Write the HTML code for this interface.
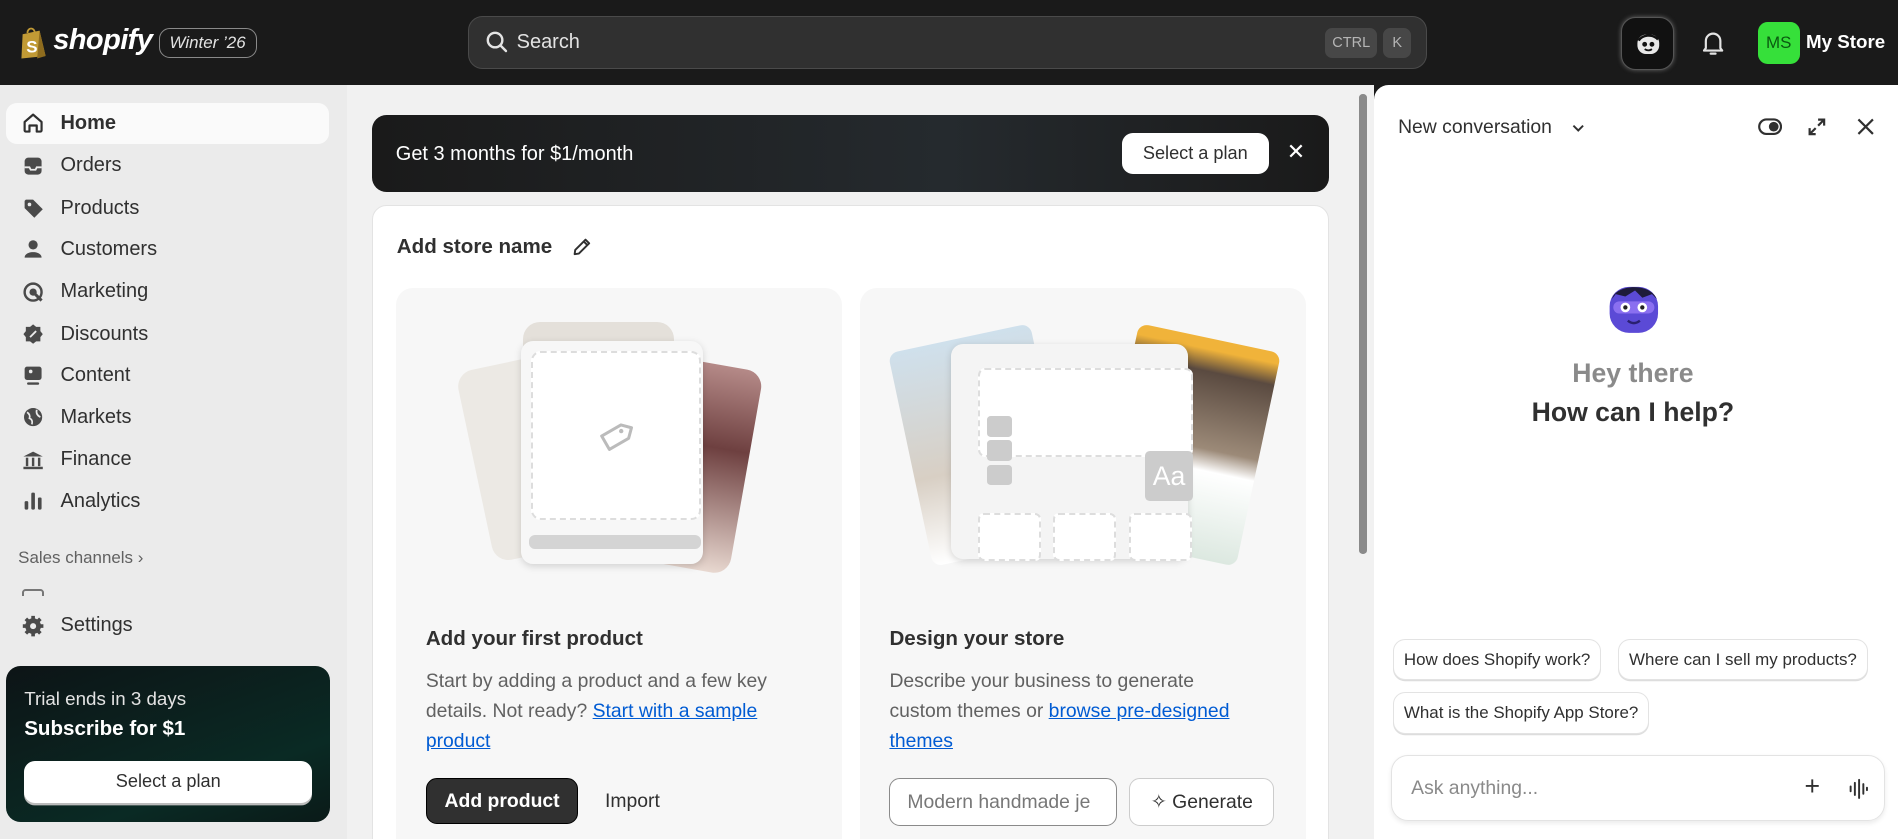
<!DOCTYPE html>
<html><head><meta charset="utf-8"><style>
*{box-sizing:border-box;margin:0;padding:0}
html,body{width:1898px;height:839px;overflow:hidden;background:#1a1a1a}
#w{zoom:1.21045;width:1568px;height:693px;position:relative;font-family:"Liberation Sans",sans-serif;color:#303030}
.a{position:absolute}
.top{left:0;top:0;width:1568px;height:70px;background:#1a1a1a}
.side{left:0;top:70px;width:287px;height:623px;background:#ebebeb}
.nav{position:absolute;left:5px;width:267px;height:34px;display:flex;align-items:center;font-size:16.5px;color:#303030}
.nav svg{position:absolute;left:12px;width:20px;height:20px}
.nav span{position:absolute;left:45px}
.main{left:287px;top:70px;width:848px;height:623px;background:#f1f1f1}
.panel{left:1135px;top:70px;width:433px;height:623px;background:#fff;border-radius:12px 0 0 0}
.sub{background:#f7f7f7;border-radius:14px}
.btn{border-radius:9px;font-size:16px;display:flex;align-items:center;justify-content:center}
a{color:#005bd3;text-decoration:underline}
.chip{position:absolute;height:34px;border:1px solid #e3e3e3;border-radius:10px;font-size:14px;display:flex;align-items:center;padding:0 8px;background:#fff;box-shadow:0 1px 0 #ddd}
</style></head><body><div id="w">
<div class="a top">
 <svg class="a" style="left:16px;top:22px" width="24" height="27" viewBox="0 0 24 27"><path d="M3 6 L17 3 L22 24 L2 26 Z" fill="#c19a35"/><path d="M17 3 L22 24 L15 26 Z" fill="#8f6c1e"/><path d="M7 5 C7 0 13 0 13 5" stroke="#c19a35" fill="none" stroke-width="1.5"/><text x="6" y="21" font-size="14" font-weight="bold" fill="#fff" font-family="Liberation Sans">S</text></svg>
 <div class="a" style="left:44px;top:20px;font-size:24px;font-weight:bold;font-style:italic;color:#fff;letter-spacing:-0.5px">shopify</div>
 <div class="a" style="left:131px;top:23px;width:81px;height:25px;border:1px solid #8a8a8a;border-radius:9px;color:#e3e3e3;font-size:14px;font-style:italic;display:flex;align-items:center;justify-content:center">Winter ’26</div>
 <div class="a" style="left:387px;top:13px;width:792px;height:44px;background:#303030;border:1px solid #4a4a4a;border-radius:12px">
  <svg class="a" style="left:14px;top:12px" width="18" height="18" viewBox="0 0 18 18"><circle cx="7.5" cy="7.5" r="6" stroke="#e3e3e3" stroke-width="2" fill="none"/><path d="M12 12 L16.5 16.5" stroke="#e3e3e3" stroke-width="2" stroke-linecap="round"/></svg>
  <div class="a" style="left:39px;top:12px;font-size:16.5px;color:#e3e3e3">Search</div>
  <div class="a" style="left:707px;top:9px;width:43px;height:25px;background:#474747;border-radius:6px;color:#b5b5b5;font-size:12px;display:flex;align-items:center;justify-content:center">CTRL</div>
  <div class="a" style="left:755px;top:9px;width:23px;height:25px;background:#474747;border-radius:6px;color:#b5b5b5;font-size:12px;display:flex;align-items:center;justify-content:center">K</div>
 </div>
 <div class="a" style="left:1339px;top:14px;width:44px;height:44px;background:#111;border:1px solid #555;border-radius:12px;box-shadow:0 0 4px #666"><svg class="a" style="left:11px;top:11px" width="22" height="22" viewBox="0 0 22 22"><rect x="2" y="3" width="18" height="16" rx="7" fill="#e8e8e8"/><path d="M3 8 C6 3 14 2 19 7" stroke="#111" stroke-width="2" fill="none"/><circle cx="8" cy="11" r="2" fill="#111"/><circle cx="14" cy="11" r="2" fill="#111"/><path d="M8 15 Q11 17 14 15" stroke="#111" stroke-width="1.5" fill="none"/></svg></div>
 <svg class="a" style="left:1405px;top:25px" width="20" height="22" viewBox="0 0 20 22"><path d="M4 15 V9 a6 6 0 0 1 12 0 V15 L17.5 17 H2.5 Z" stroke="#e3e3e3" stroke-width="1.8" fill="none" stroke-linejoin="round"/><path d="M8 19.5 h4" stroke="#e3e3e3" stroke-width="1.8" stroke-linecap="round"/></svg>
 <div class="a" style="left:1452px;top:18px;width:35px;height:35px;background:#36e03a;border-radius:8px;color:#0a5a10;font-size:14px;display:flex;align-items:center;justify-content:center">MS</div>
 <div class="a" style="left:1492px;top:26px;font-size:15.5px;font-weight:bold;color:#fff">My Store</div>
</div>

<div class="a side">
 <div class="nav" style="top:15px;background:#fafafa;border-radius:9px;font-weight:600"><svg viewBox="0 0 20 20"><path d="M3 9 L10 3 L17 9 V16 a1 1 0 0 1-1 1 H13 V12 H7 V17 H4 a1 1 0 0 1-1-1 Z" stroke="#303030" stroke-width="1.8" fill="none" stroke-linejoin="round"/></svg><span>Home</span></div>
 <div class="nav" style="top:50px"><svg viewBox="0 0 20 20"><rect x="3" y="3" width="14" height="14" rx="3" fill="#4a4a4a"/><path d="M3 11 H7 L8 13 H12 L13 11 H17" stroke="#ebebeb" stroke-width="1.5" fill="none"/></svg><span>Orders</span></div>
 <div class="nav" style="top:85px"><svg viewBox="0 0 20 20"><path d="M3 4 V10 L11 18 L18 11 L10 3 H4 Z" fill="#4a4a4a"/><circle cx="7" cy="7" r="1.5" fill="#ebebeb"/></svg><span>Products</span></div>
 <div class="nav" style="top:119px"><svg viewBox="0 0 20 20"><circle cx="10" cy="6.5" r="3.8" fill="#4a4a4a"/><path d="M3 17 C3 11 17 11 17 17 Z" fill="#4a4a4a"/></svg><span>Customers</span></div>
 <div class="nav" style="top:154px"><svg viewBox="0 0 20 20"><circle cx="10" cy="10" r="7" stroke="#4a4a4a" stroke-width="2" fill="none"/><circle cx="10" cy="10" r="3" fill="#4a4a4a"/><path d="M10 10 L17 17" stroke="#4a4a4a" stroke-width="2.5"/></svg><span>Marketing</span></div>
 <div class="nav" style="top:189px"><svg viewBox="0 0 20 20"><path d="M10 2 L12.5 4 L16 4 L16 7.5 L18 10 L16 12.5 L16 16 L12.5 16 L10 18 L7.5 16 L4 16 L4 12.5 L2 10 L4 7.5 L4 4 L7.5 4 Z" fill="#4a4a4a"/><path d="M7.5 12.5 L12.5 7.5" stroke="#ebebeb" stroke-width="1.5"/></svg><span>Discounts</span></div>
 <div class="nav" style="top:223px"><svg viewBox="0 0 20 20"><rect x="3" y="3" width="14" height="11" rx="2" fill="#4a4a4a"/><rect x="5" y="16" width="10" height="2" rx="1" fill="#4a4a4a"/><circle cx="8" cy="7" r="1.5" fill="#ebebeb"/></svg><span>Content</span></div>
 <div class="nav" style="top:258px"><svg viewBox="0 0 20 20"><circle cx="10" cy="10" r="7.5" fill="#4a4a4a"/><path d="M5 6 Q8 8 7 11 Q10 12 9 16 M13 4 Q12 8 16 10" stroke="#ebebeb" stroke-width="1.4" fill="none"/></svg><span>Markets</span></div>
 <div class="nav" style="top:293px"><svg viewBox="0 0 20 20"><path d="M2 7 L10 3 L18 7 Z" fill="#4a4a4a"/><rect x="4" y="8" width="2" height="7" fill="#4a4a4a"/><rect x="9" y="8" width="2" height="7" fill="#4a4a4a"/><rect x="14" y="8" width="2" height="7" fill="#4a4a4a"/><rect x="2" y="15.5" width="16" height="2" fill="#4a4a4a"/></svg><span>Finance</span></div>
 <div class="nav" style="top:327px"><svg viewBox="0 0 20 20"><rect x="3" y="10" width="3" height="7" rx="1" fill="#4a4a4a"/><rect x="8.5" y="3" width="3" height="14" rx="1" fill="#4a4a4a"/><rect x="14" y="7" width="3" height="10" rx="1" fill="#4a4a4a"/></svg><span>Analytics</span></div>
 <div class="a" style="left:15px;top:383px;font-size:14px;color:#616161">Sales channels ›</div>
 <div class="a" style="left:18px;top:417px;width:90px;height:5px;overflow:hidden"><div style="width:18px;height:10px;border:2px solid #777;border-radius:3px"></div></div>
 <div class="nav" style="top:430px"><svg viewBox="0 0 20 20"><circle cx="10" cy="10" r="6.5" fill="#4a4a4a"/><path d="M10 1.5 V5 M10 15 V18.5 M1.5 10 H5 M15 10 H18.5 M4 4 L6.5 6.5 M13.5 13.5 L16 16 M16 4 L13.5 6.5 M6.5 13.5 L4 16" stroke="#4a4a4a" stroke-width="3"/><circle cx="10" cy="10" r="2.5" fill="#ebebeb"/></svg><span>Settings</span></div>
 <div class="a" style="left:5px;top:480px;width:268px;height:129px;border-radius:12px;background:linear-gradient(160deg,#0d1416,#0a2a24 70%,#0a1a18);">
  <div class="a" style="left:15px;top:18px;font-size:15.5px;color:#e3e3e3">Trial ends in 3 days</div>
  <div class="a" style="left:15px;top:42px;font-size:17px;font-weight:bold;color:#fff">Subscribe for $1</div>
  <div class="a btn" style="left:15px;top:79px;width:238px;height:34px;background:#fff;color:#303030;font-size:15px;box-shadow:0 2px 0 #bbb">Select a plan</div>
 </div>
</div>

<div class="a main">
 <div class="a" style="left:20px;top:25px;width:791px;height:64px;border-radius:12px;background:linear-gradient(90deg,#1a1a1a,#252a2e 60%,#1a1a1a)">
  <div class="a" style="left:20px;top:23px;font-size:16.5px;color:#fff">Get 3 months for $1/month</div>
  <div class="a btn" style="left:620px;top:15px;width:121px;height:34px;background:#fff;color:#303030;font-size:15px">Select a plan</div>
  <div class="a" style="left:756px;top:20px;color:#fff;font-size:18px">✕</div>
 </div>
 <div class="a" style="left:20px;top:99px;width:791px;height:540px;background:#fff;border-radius:12px;border:1px solid #e3e3e3">
  <div class="a" style="left:20px;top:24px;font-size:17px;font-weight:600">Add store name</div>
  <svg class="a" style="left:164px;top:25px" width="18" height="18" viewBox="0 0 18 18"><path d="M3 15 L3.5 11.5 L12 3 L15 6 L6.5 14.5 Z M10.5 4.5 L13.5 7.5" stroke="#303030" stroke-width="1.6" fill="none" stroke-linejoin="round"/></svg>
  <div class="a sub" style="left:19px;top:68px;width:369px;height:480px">
   <div class="a" style="left:65px;top:60px;width:90px;height:160px;background:#ece9e4;border-radius:14px;transform:rotate(-12deg)"></div>
   <div class="a" style="left:185px;top:60px;width:105px;height:170px;background:linear-gradient(#b58a88,#6e4040 40%,#e8d8d0);border-radius:14px;transform:rotate(10deg)"></div>
   <div class="a" style="left:105px;top:28px;width:125px;height:40px;background:#e4e0da;border-radius:14px"></div>
   <div class="a" style="left:104px;top:44px;width:150px;height:184px;background:#f7f7f7;border-radius:10px;box-shadow:0 2px 6px rgba(0,0,0,.15)">
    <div class="a" style="left:8px;top:8px;width:140px;height:140px;border:2px dashed #ddd;background:#fff;border-radius:8px"></div>
    <svg class="a" style="left:62px;top:64px" width="30" height="30" viewBox="0 0 30 30"><path d="M17 4 L26 4 L26 13 L13 26 L4 17 Z" stroke="#bbb" stroke-width="2.5" fill="none" stroke-linejoin="round" transform="rotate(15 15 15)"/><circle cx="20" cy="10" r="1.8" fill="#bbb"/></svg>
    <div class="a" style="left:6px;top:160px;width:142px;height:12px;background:#d4d4d4;border-radius:5px"></div>
   </div>
   <div class="a" style="left:25px;top:280px;font-size:17px;font-weight:600">Add your first product</div>
   <div class="a" style="left:25px;top:312px;width:330px;font-size:16px;line-height:25px;color:#616161">Start by adding a product and a few key details. Not ready? <a>Start with a sample product</a></div>
   <div class="a btn" style="left:25px;top:405px;width:126px;height:38px;background:#303030;color:#fff;font-weight:600;border:1px solid #000">Add product</div>
   <div class="a" style="left:173px;top:415px;font-size:16px">Import</div>
  </div>
  <div class="a sub" style="left:403px;top:68px;width:368px;height:480px">
   <div class="a" style="left:40px;top:40px;width:120px;height:180px;background:linear-gradient(#cfe0ec,#d8cfc4 60%,#fff);border-radius:8px;transform:rotate(-12deg)"></div>
   <div class="a" style="left:210px;top:40px;width:120px;height:180px;background:linear-gradient(#f0b33a 5%,#5a4a40 15%,#9c8a78 50%,#fff 60%,#dce8e0);border-radius:8px;transform:rotate(12deg)"></div>
   <div class="a" style="left:75px;top:46px;width:196px;height:178px;background:#f4f4f4;border-radius:10px;box-shadow:0 2px 6px rgba(0,0,0,.15)">
    <div class="a" style="left:22px;top:20px;width:178px;height:74px;border:2px dashed #ddd;background:#fff;border-radius:6px"></div>
    <div class="a" style="left:30px;top:60px;width:20px;height:17px;background:#ccc;border-radius:3px"></div>
    <div class="a" style="left:30px;top:80px;width:20px;height:17px;background:#ccc;border-radius:3px"></div>
    <div class="a" style="left:30px;top:100px;width:20px;height:17px;background:#ccc;border-radius:3px"></div>
    <div class="a" style="left:160px;top:89px;width:40px;height:41px;background:#ccc;border-radius:4px;color:#fff;font-size:22px;display:flex;align-items:center;justify-content:center">Aa</div>
    <div class="a" style="left:22px;top:140px;width:52px;height:40px;border:2px dashed #ddd;background:#fff;border-radius:5px"></div>
    <div class="a" style="left:84px;top:140px;width:52px;height:40px;border:2px dashed #ddd;background:#fff;border-radius:5px"></div>
    <div class="a" style="left:147px;top:140px;width:52px;height:40px;border:2px dashed #ddd;background:#fff;border-radius:5px"></div>
   </div>
   <div class="a" style="left:24px;top:280px;font-size:17px;font-weight:600">Design your store</div>
   <div class="a" style="left:24px;top:312px;width:300px;font-size:16px;line-height:25px;color:#616161">Describe your business to generate custom themes or <a>browse pre-designed themes</a></div>
   <div class="a" style="left:24px;top:405px;width:188px;height:40px;border:1px solid #8a8a8a;border-radius:9px;background:#fff;font-size:16px;color:#777;padding:10px 14px;white-space:nowrap;overflow:hidden">Modern handmade je</div>
   <div class="a btn" style="left:222px;top:405px;width:120px;height:40px;background:#fff;border:1px solid #ccc;gap:6px">✧ Generate</div>
  </div>
 </div>
 <div class="a" style="left:836px;top:8px;width:6px;height:380px;background:#8a8a8a;border-radius:3px"></div>
</div>

<div class="a panel">
 <div class="a" style="left:20px;top:26px;font-size:16px;color:#303030">New conversation</div>
 <svg class="a" style="left:163px;top:31px" width="12" height="10" viewBox="0 0 12 10"><path d="M2 3 L6 7 L10 3" stroke="#303030" stroke-width="1.6" fill="none"/></svg>
 <svg class="a" style="left:317px;top:27px" width="20" height="16" viewBox="0 0 20 16"><rect x="1" y="2" width="18" height="12" rx="6" stroke="#303030" stroke-width="1.8" fill="none"/><circle cx="13" cy="8" r="4" fill="#303030"/></svg>
 <svg class="a" style="left:357px;top:26px" width="18" height="18" viewBox="0 0 18 18"><path d="M10 3 H15 V8 M15 3 L10 8 M8 15 H3 V10 M3 15 L8 10" stroke="#303030" stroke-width="1.8" fill="none"/></svg>
 <svg class="a" style="left:398px;top:27px" width="16" height="16" viewBox="0 0 16 16"><path d="M2 2 L14 14 M14 2 L2 14" stroke="#303030" stroke-width="1.8"/></svg>
 <svg class="a" style="left:192px;top:163px" width="46" height="44" viewBox="0 0 46 44"><rect x="3" y="4" width="40" height="38" rx="16" fill="#5b4ad6"/><path d="M5 14 C8 2 36 0 42 14 L38 10 L30 13 L24 7 L16 12 L8 10 Z" fill="#1e1b3a"/><rect x="6" y="16" width="34" height="10" rx="5" fill="#8a6ff0"/><circle cx="16" cy="21" r="4" fill="#fff"/><circle cx="30" cy="21" r="4" fill="#fff"/><circle cx="16" cy="21" r="1.8" fill="#222"/><circle cx="30" cy="21" r="1.8" fill="#222"/><path d="M18 32 Q23 36 28 32" stroke="#2a2070" stroke-width="2" fill="none"/></svg>
 <div class="a" style="left:0;top:226px;width:428px;text-align:center;font-size:22px;font-weight:bold;color:#8a8a8a">Hey there</div>
 <div class="a" style="left:0;top:258px;width:428px;text-align:center;font-size:22px;font-weight:bold;color:#303030">How can I help?</div>
 <div class="chip" style="left:16px;top:458px">How does Shopify work?</div>
 <div class="chip" style="left:202px;top:458px">Where can I sell my products?</div>
 <div class="chip" style="left:16px;top:502px">What is the Shopify App Store?</div>
 <div class="a" style="left:14px;top:554px;width:408px;height:54px;border:1px solid #e3e3e3;border-radius:14px;box-shadow:0 2px 4px rgba(0,0,0,.08)">
  <div class="a" style="left:16px;top:17px;font-size:16px;color:#8a8a8a">Ask anything...</div>
  <div class="a" style="left:341px;top:12px;font-size:22px;color:#303030">+</div>
  <svg class="a" style="left:376px;top:18px" width="18" height="18" viewBox="0 0 18 18"><path d="M3 7 V11 M6.5 4 V14 M10 1.5 V16.5 M13.5 5 V13 M16.5 8 V10" stroke="#303030" stroke-width="1.6" stroke-linecap="round"/></svg>
 </div>
</div>
</div></body></html>
